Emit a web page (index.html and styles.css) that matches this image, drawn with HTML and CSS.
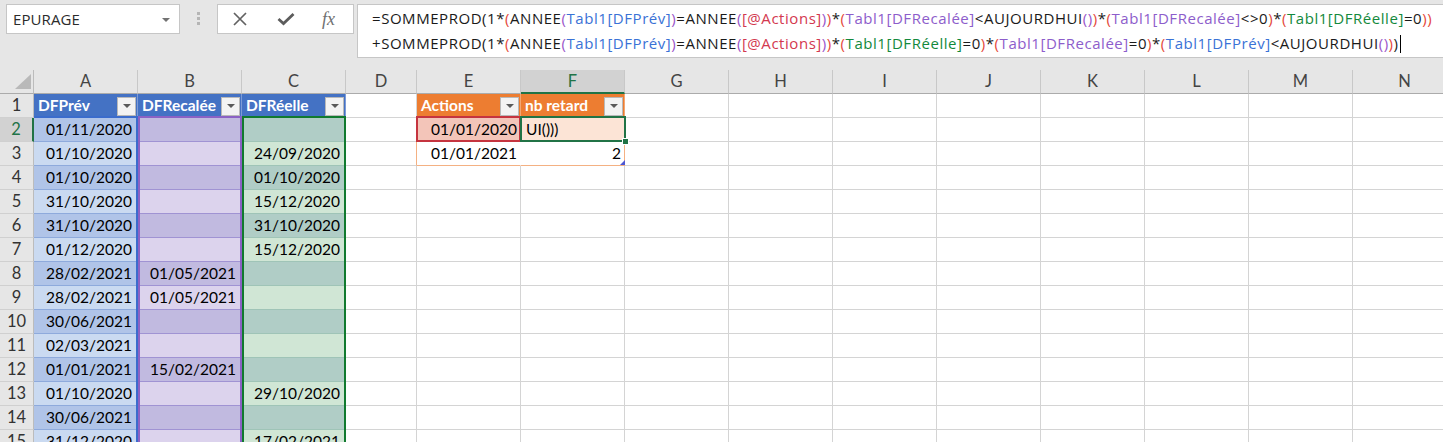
FILE: index.html
```html
<!DOCTYPE html>
<html lang="fr">
<head>
<meta charset="utf-8">
<title>Classeur - EPURAGE</title>
<link rel="stylesheet" href="styles.css">
</head>
<body>
<div class="app">
  <div class="toolbar">
    <div class="namebox"><span class="nb-text">EPURAGE</span><i class="nb-arrow"></i></div>
    <div class="grip"><i></i><i></i><i></i></div>
    <div class="fbtns">
      <svg class="ic-x" width="16" height="14" viewBox="0 0 16 14"><path d="M2 1 L14 13 M14 1 L2 13" stroke="#626262" stroke-width="1.7" fill="none"/></svg>
      <svg class="ic-check" width="18" height="14" viewBox="0 0 18 14"><path d="M1.5 7 L6.5 11.5 L16.5 2" fill="none" stroke="#5c5c5c" stroke-width="2.8"/></svg>
      <span class="fx">fx</span>
    </div>
    <div class="formula">
      <div class="fl">=SOMMEPROD(1*<span class="o">(</span>ANNEE<span class="p">(</span><span class="rb">Tabl1[DFPrév]</span><span class="p">)</span>=ANNEE<span class="p">(</span><span class="rr">[@Actions]</span><span class="p">)</span><span class="o">)</span>*<span class="o">(</span><span class="rv">Tabl1[DFRecalée]</span>&lt;AUJOURDHUI<span class="p">()</span><span class="o">)</span>*<span class="o">(</span><span class="rv">Tabl1[DFRecalée]</span>&lt;&gt;0<span class="o">)</span>*<span class="o">(</span><span class="rg">Tabl1[DFRéelle]</span>=0<span class="o">)</span><span class="o">)</span></div>
      <div class="fl">+SOMMEPROD(1*<span class="o">(</span>ANNEE<span class="p">(</span><span class="rb">Tabl1[DFPrév]</span><span class="p">)</span>=ANNEE<span class="p">(</span><span class="rr">[@Actions]</span><span class="p">)</span><span class="o">)</span>*<span class="o">(</span><span class="rg">Tabl1[DFRéelle]</span>=0<span class="o">)</span>*<span class="o">(</span><span class="rv">Tabl1[DFRecalée]</span>=0<span class="o">)</span>*<span class="o">(</span><span class="rb">Tabl1[DFPrév]</span>&lt;AUJOURDHUI<span class="p">()</span><span class="o">)</span>)<span class="caret"></span></div>
    </div>
  </div>

  <div class="sheet">
    <div class="r hdr">
      <div class="corner"><svg width="18" height="16" viewBox="0 0 18 16"><polygon points="17,0 17,15 1,15" fill="#b9b9b9"/></svg></div>
      <div>A</div><div>B</div><div>C</div><div>D</div><div>E</div><div class="selc">F</div><div>G</div><div>H</div><div>I</div><div>J</div><div>K</div><div>L</div><div>M</div><div>N</div>
    </div>

    <div class="r">
      <div class="rh">1</div>
      <div class="th blue"><span>DFPrév</span><i class="dd"></i></div>
      <div class="th blue"><span>DFRecalée</span><i class="dd"></i></div>
      <div class="th blue"><span>DFRéelle</span><i class="dd"></i></div>
      <div></div>
      <div class="th orange"><span>Actions</span><i class="dd"></i></div>
      <div class="th orange"><span>nb retard</span><i class="dd"></i></div>
      <div></div><div></div><div></div><div></div><div></div><div></div><div></div><div></div>
    </div>

    <div class="r">
      <div class="rh selr">2</div>
      <div class="a dk n">01/11/2020</div><div class="b dk"></div><div class="c dk"></div>
      <div></div>
      <div class="e2 n">01/01/2020</div><div class="f2">UI()))</div>
      <div></div><div></div><div></div><div></div><div></div><div></div><div></div><div></div>
    </div>

    <div class="r">
      <div class="rh">3</div>
      <div class="a lt n">01/10/2020</div><div class="b lt"></div><div class="c lt n">24/09/2020</div>
      <div class="d3"></div>
      <div class="e3 n">01/01/2021</div><div class="f3 n">2</div>
      <div></div><div></div><div></div><div></div><div></div><div></div><div></div><div></div>
    </div>

    <div class="r">
      <div class="rh">4</div>
      <div class="a dk n">01/10/2020</div><div class="b dk"></div><div class="c dk n">01/10/2020</div>
      <div></div><div></div><div></div>
      <div></div><div></div><div></div><div></div><div></div><div></div><div></div><div></div>
    </div>

    <div class="r">
      <div class="rh">5</div>
      <div class="a lt n">31/10/2020</div><div class="b lt"></div><div class="c lt n">15/12/2020</div>
      <div></div><div></div><div></div>
      <div></div><div></div><div></div><div></div><div></div><div></div><div></div><div></div>
    </div>

    <div class="r">
      <div class="rh">6</div>
      <div class="a dk n">31/10/2020</div><div class="b dk"></div><div class="c dk n">31/10/2020</div>
      <div></div><div></div><div></div>
      <div></div><div></div><div></div><div></div><div></div><div></div><div></div><div></div>
    </div>

    <div class="r">
      <div class="rh">7</div>
      <div class="a lt n">01/12/2020</div><div class="b lt"></div><div class="c lt n">15/12/2020</div>
      <div></div><div></div><div></div>
      <div></div><div></div><div></div><div></div><div></div><div></div><div></div><div></div>
    </div>

    <div class="r">
      <div class="rh">8</div>
      <div class="a dk n">28/02/2021</div><div class="b dk n">01/05/2021</div><div class="c dk"></div>
      <div></div><div></div><div></div>
      <div></div><div></div><div></div><div></div><div></div><div></div><div></div><div></div>
    </div>

    <div class="r">
      <div class="rh">9</div>
      <div class="a lt n">28/02/2021</div><div class="b lt n">01/05/2021</div><div class="c lt"></div>
      <div></div><div></div><div></div>
      <div></div><div></div><div></div><div></div><div></div><div></div><div></div><div></div>
    </div>

    <div class="r">
      <div class="rh">10</div>
      <div class="a dk n">30/06/2021</div><div class="b dk"></div><div class="c dk"></div>
      <div></div><div></div><div></div>
      <div></div><div></div><div></div><div></div><div></div><div></div><div></div><div></div>
    </div>

    <div class="r">
      <div class="rh">11</div>
      <div class="a lt n">02/03/2021</div><div class="b lt"></div><div class="c lt"></div>
      <div></div><div></div><div></div>
      <div></div><div></div><div></div><div></div><div></div><div></div><div></div><div></div>
    </div>

    <div class="r">
      <div class="rh">12</div>
      <div class="a dk n">01/01/2021</div><div class="b dk n">15/02/2021</div><div class="c dk"></div>
      <div></div><div></div><div></div>
      <div></div><div></div><div></div><div></div><div></div><div></div><div></div><div></div>
    </div>

    <div class="r">
      <div class="rh">13</div>
      <div class="a lt n">01/10/2020</div><div class="b lt"></div><div class="c lt n">29/10/2020</div>
      <div></div><div></div><div></div>
      <div></div><div></div><div></div><div></div><div></div><div></div><div></div><div></div>
    </div>

    <div class="r">
      <div class="rh">14</div>
      <div class="a dk n">30/06/2021</div><div class="b dk"></div><div class="c dk"></div>
      <div></div><div></div><div></div>
      <div></div><div></div><div></div><div></div><div></div><div></div><div></div><div></div>
    </div>

    <div class="r">
      <div class="rh">15</div>
      <div class="a lt n">31/12/2020</div><div class="b lt"></div><div class="c lt n">17/02/2021</div>
      <div></div><div></div><div></div>
      <div></div><div></div><div></div><div></div><div></div><div></div><div></div><div></div>
    </div>

    <div class="hl hl-blue"></div>
    <div class="hl hl-purple"></div>
    <div class="hl hl-green"></div>
    <div class="hl hl-red"></div>
    <div class="hl active"></div>
    <div class="hl fill-handle"></div>
    <div class="hl tbl-handle"></div>
  </div>
</div>
</body>
</html>
```

FILE: styles.css
```css
html, body {
  margin: 0;
  padding: 0;
  background: #ffffff;
}

body {
  width: 1443px;
  height: 442px;
  overflow: hidden;
  font-family: Lato, "Open Sans", "Liberation Sans", sans-serif;
  color: #000;
}

.app {
  width: 1443px;
  height: 442px;
  overflow: hidden;
}

/* ---------- formula toolbar ---------- */
.toolbar {
  height: 70px;
  box-sizing: border-box;
  background: #e6e6e6;
  display: flex;
  align-items: flex-start;
  padding: 4px 0 0 6px;
  font-family: "Open Sans", "Noto Sans", sans-serif;
}

.namebox {
  width: 174px;
  height: 30px;
  box-sizing: border-box;
  background: #fff;
  border: 1px solid #c6c6c6;
  display: flex;
  align-items: center;
  justify-content: space-between;
  padding: 0 9px 0 6px;
  flex: none;
}

.nb-text {
  font-size: 15px;
  color: #2b2b2b;
  letter-spacing: 0.1px;
}

.nb-arrow {
  width: 0;
  height: 0;
  border-left: 4px solid transparent;
  border-right: 4px solid transparent;
  border-top: 4px solid #727272;
  margin-top: 1px;
}

.grip {
  width: 3px;
  margin: 8px 0 0 17px;
  display: flex;
  flex-direction: column;
  gap: 2px;
  flex: none;
}

.grip i {
  display: block;
  width: 3px;
  height: 3px;
  background: #b5b5b5;
}

.fbtns {
  margin-left: 17px;
  width: 137px;
  height: 30px;
  box-sizing: border-box;
  background: #fff;
  border: 1px solid #c6c6c6;
  display: flex;
  align-items: center;
  padding-left: 14px;
  flex: none;
}

.ic-x {
  display: block;
}

.ic-check {
  display: block;
  margin-left: 29px;
}

.fx {
  margin-left: 27px;
  font-family: "Liberation Serif", "DejaVu Serif", serif;
  font-style: italic;
  font-size: 18px;
  color: #707070;
  line-height: 1;
  margin-top: -1px;
}

.formula {
  margin-left: 3px;
  flex: 1;
  margin-right: -4px;
  height: 54px;
  box-sizing: border-box;
  background: #fff;
  border: 1px solid #c6c6c6;
  padding: 1px 0 0 14px;
  font-size: 15px;
  letter-spacing: 0.55px;
  color: #1a1a1a;
  white-space: nowrap;
}

.fl {
  height: 25px;
  line-height: 25px;
}

.o { color: #e4473a; }
.p { color: #9a55c9; }
.rb { color: #3a72d6; }
.rv { color: #8d5dcb; }
.rr { color: #d3384f; }
.rg { color: #13893c; }

.caret {
  display: inline-block;
  width: 0;
  height: 18px;
  border-left: 1.5px solid #000;
  vertical-align: -4px;
  margin-left: 1px;
}

/* ---------- sheet grid ---------- */
.sheet {
  position: relative;
  height: 372px;
  overflow: hidden;
}

.r {
  display: grid;
  grid-template-columns: 34px repeat(3, 104px) 71px repeat(10, 104px);
  height: 24px;
}

.r > * {
  box-sizing: border-box;
  height: 24px;
  border-right: 1px solid #d4d4d4;
  border-bottom: 1px solid #d4d4d4;
  padding: 0 5px;
  line-height: 23px;
  font-size: 15.5px;
  white-space: nowrap;
  overflow: hidden;
}

.n { text-align: right; }

/* column header */
.hdr > * {
  background: #e6e6e6;
  text-align: center;
  border-right-color: #c8c8c8;
  border-bottom-color: #ababab;
  color: #444;
  font-size: 16.5px;
  padding: 0;
}

.hdr .corner {
  position: relative;
  display: flex;
  align-items: flex-end;
  justify-content: flex-end;
  padding: 0 1px 3px 0;
  border-right-color: #bcbcbc;
}

.hdr .corner svg { display: block; }

.hdr .selc {
  background: #d2d2d2;
  color: #217346;
  border-bottom: 2px solid #217346;
}

/* row header */
.r > .rh {
  background: #e6e6e6;
  text-align: center;
  border-right-color: #bcbcbc;
  border-bottom-color: #d0d0d0;
  color: #333;
  font-size: 16.5px;
  padding: 0;
}

.r > .rh.selr {
  background: #d2d2d2;
  color: #217346;
  border-right: 2px solid #217346;
}

/* table headers */
.r > .th {
  display: flex;
  align-items: center;
  justify-content: space-between;
  padding: 0 1px 0 4px;
  color: #fff;
  font-weight: 700;
}

.th.blue {
  background: #4472c4;
  border-right-color: #7d9bd6;
  border-bottom-color: #4472c4;
}

.th.orange {
  background: #ed7d31;
  border-right-color: #f3a774;
  border-bottom-color: #ed7d31;
}

.dd {
  width: 19px;
  height: 19px;
  box-sizing: border-box;
  background: #f3f3f3;
  border: 1px solid #b9b9b9;
  display: flex;
  align-items: center;
  justify-content: center;
  flex: none;
  margin-top: 1px;
}

.dd::after {
  content: "";
  width: 0;
  height: 0;
  border-left: 4px solid transparent;
  border-right: 4px solid transparent;
  border-top: 4px solid #5a5a5a;
}

/* table 1 bands */
.a.dk { background: #b0c4e8; }
.a.lt { background: #cadaf1; }
.a { border-bottom-color: #8eaadc; border-right-color: #3b6ccc; }

.b.dk { background: #c1bae0; }
.b.lt { background: #dcd3ed; }
.b { border-bottom-color: #a093d3; border-right-color: #8b62c4; }

.c.dk { background: #b0cdc6; }
.c.lt { background: #d0e6d5; }
.c { border-bottom-color: #9fc4b7; border-right-color: #117a2f; }

/* table 2 */
.r > .e2 { background: #f3c5b9; padding-right: 3px; }
.r > .f2 { background: #fce4d6; padding-left: 5px; }
.r > .d3 { border-right-color: #f4b183; }
.r > .e3 { border-right-color: #ffffff; border-bottom-color: #f4b183; padding-right: 3px; }
.r > .f3 { border-right-color: #f4b183; border-bottom-color: #f4b183; padding-right: 3px; }

/* ---------- overlays (reference highlights over cells) ---------- */
.hl {
  position: absolute;
  box-sizing: border-box;
  pointer-events: none;
}

.hl-blue {
  left: 34px;
  top: 46px;
  width: 104px;
  height: 340px;
  border-top: 2px solid #3b6ccc;
  border-right: 2px solid #3b6ccc;
}

.hl-purple {
  left: 138px;
  top: 46px;
  width: 104px;
  height: 340px;
  border: 2px solid #8b62c4;
  border-bottom: none;
}

.hl-green {
  left: 242px;
  top: 46px;
  width: 104px;
  height: 340px;
  border: 2px solid #117a2f;
  border-bottom: none;
}

.hl-red {
  left: 416px;
  top: 46px;
  width: 105px;
  height: 26px;
  border: 2px solid #c5343f;
}

.active {
  left: 520px;
  top: 46px;
  width: 106px;
  height: 26px;
  border: 2px solid #217346;
}

.fill-handle {
  left: 622px;
  top: 68px;
  width: 7px;
  height: 7px;
  background: #217346;
  border: 1px solid #ffffff;
}

.tbl-handle {
  left: 620px;
  top: 90px;
  width: 5px;
  height: 5px;
  background: #4d57d3;
  clip-path: polygon(100% 0, 100% 100%, 0 100%);
}
```
